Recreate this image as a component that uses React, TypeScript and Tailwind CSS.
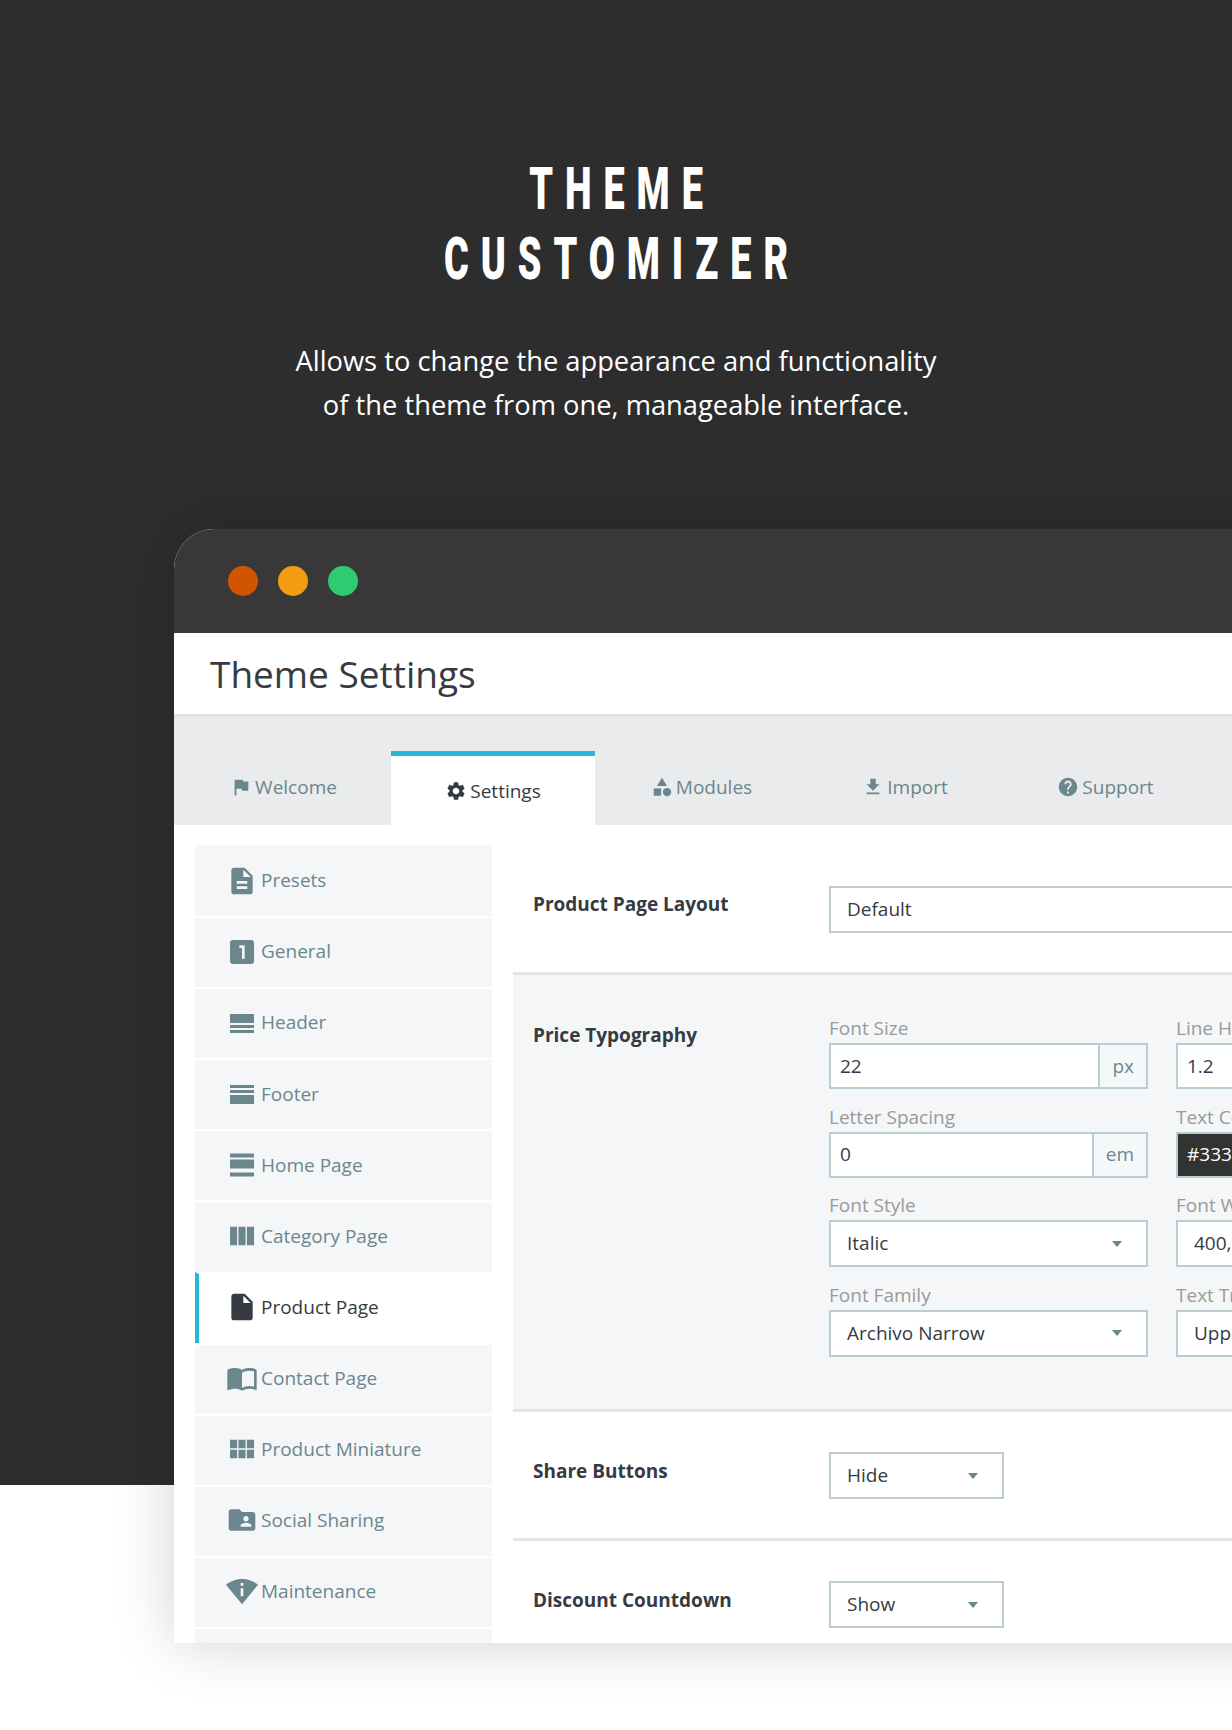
import type { ReactNode } from "react";
import {
  MdCategory,
  MdDescription,
  MdFileDownload,
  MdFlag,
  MdFolderShared,
  MdHelp,
  MdImportContacts,
  MdInsertDriveFile,
  MdLooksOne,
  MdPermScanWifi,
  MdSettings,
  MdViewColumn,
  MdViewModule,
} from "react-icons/md";

function Bars({ rows }: { rows: [number, number][] }) {
  return (
    <svg width="32" height="32" viewBox="0 0 32 32" fill="currentColor">
      {rows.map(([y, h]) => (
        <rect key={y} x="4" y={y} width="24" height={h} />
      ))}
    </svg>
  );
}

const tabs = [
  { label: "Welcome", icon: MdFlag, width: "w-[217px] pl-[2px]" },
  { label: "Settings", icon: MdSettings, width: "w-[204px]", active: true },
  { label: "Modules", icon: MdCategory, width: "w-[218px] pr-[5px]" },
  { label: "Import", icon: MdFileDownload, width: "w-[184px]" },
  { label: "Support", icon: MdHelp, width: "w-[215px] pl-[2px]" },
];

const menu: { label: string; icon: ReactNode; active?: boolean }[] = [
  { label: "Presets", icon: <MdDescription size={32} /> },
  { label: "General", icon: <MdLooksOne size={32} /> },
  { label: "Header", icon: <Bars rows={[[7, 9], [18, 3], [23, 3]]} /> },
  { label: "Footer", icon: <Bars rows={[[7, 3], [12, 3], [17, 9]]} /> },
  { label: "Home Page", icon: <Bars rows={[[4.5, 4], [10.5, 9], [23.5, 4]]} /> },
  { label: "Category Page", icon: <MdViewColumn size={32} /> },
  { label: "Product Page", icon: <MdInsertDriveFile size={32} />, active: true },
  { label: "Contact Page", icon: <MdImportContacts size={32} /> },
  { label: "Product Miniature", icon: <MdViewModule size={32} /> },
  { label: "Social Sharing", icon: <MdFolderShared size={32} /> },
  { label: "Maintenance", icon: <MdPermScanWifi size={32} /> },
  { label: "Custom Code", icon: <MdDescription size={32} /> },
];

function Caret() {
  return <span className="h-0 w-0 border-x-[5px] border-t-[6px] border-x-transparent border-t-[#6c868e]" />;
}

function Select({ value, className = "" }: { value: string; className?: string }) {
  return (
    <div className={`flex h-[47px] items-center justify-between border-2 border-[#bbcdd2] bg-white pl-[16px] pr-[24px] text-[#363a41] ${className}`}>
      <span>{value}</span>
      <Caret />
    </div>
  );
}

function Field({ label, children }: { label: string; children: ReactNode }) {
  return (
    <div>
      <div className="mb-[4px] h-[22px] leading-[22px] text-[#9a9a9a]">{label}</div>
      {children}
    </div>
  );
}

function Addon({ value, unit }: { value: string; unit: string }) {
  return (
    <div className="flex h-[46px] items-stretch border-2 border-[#bbcdd2] bg-white text-[#363a41]">
      <div className="flex flex-1 items-center pl-[9px]">{value}</div>
      {unit && (
        <div className="flex items-center border-l-2 border-[#bbcdd2] bg-[#f5f8f9] px-[12px] text-[#6c868e]">{unit}</div>
      )}
    </div>
  );
}

export default function App() {
  return (
    <div className="h-[1730px] w-[1232px] overflow-hidden bg-white font-['Open_Sans',sans-serif]">
      <div className="h-[1485px] bg-[#2d2d2d] pt-[154px]">
        <h1 className="origin-center scale-x-[0.63] pl-[19px] text-center font-['Roboto',sans-serif] text-[60px] font-black uppercase leading-[70px] tracking-[19px] text-white">
          Theme
          <br />
          Customizer
        </h1>
        <p className="mt-[45px] text-center text-[27.3px] leading-[44px] text-white">
          Allows to change the appearance and functionality
          <br />
          of the theme from one, manageable interface.
        </p>

        <div className="ml-[174px] mt-[102px] h-[1114px] w-[1200px] overflow-hidden rounded-tl-[40px] bg-white shadow-[0_0_60px_rgba(0,0,0,0.18)]">
          <div className="flex h-[104px] items-center gap-[20px] bg-[#383838] pl-[54px]">
            <span className="h-[30px] w-[30px] rounded-full bg-[#d35400]" />
            <span className="h-[30px] w-[30px] rounded-full bg-[#f39c12]" />
            <span className="h-[30px] w-[30px] rounded-full bg-[#2ecc71]" />
          </div>

          <div className="flex h-[84px] items-center border-b-[3px] border-[#dfe1e3] pl-[36px] text-[37px] text-[#363a41]">
            Theme Settings
          </div>

          <div className="flex h-[108px] items-end bg-[#eaebec]">
            {tabs.map((tab) => (
              <div
                key={tab.label}
                className={`flex h-[74px] items-center justify-center gap-[3px] text-[19px] ${tab.width} ${
                  tab.active
                    ? "border-t-[5px] border-[#25b9d7] bg-white pt-[1px] text-[#363a41]"
                    : "pb-[2px] text-[#6c868e]"
                }`}
              >
                <tab.icon size={22} />
                {tab.label}
              </div>
            ))}
          </div>

          <div className="flex gap-[21px] pl-[21px] pt-[20px] text-[19px]">
            <div className="w-[297px] shrink-0">
              {menu.map((item) => (
                <div
                  key={item.label}
                  className={`flex h-[71.1px] items-center gap-[3px] border-t-2 pb-[2px] first:border-t-[#f4f6f8] ${
                    item.active
                      ? "border-white border-l-4 border-l-[#25b9d7] bg-white pl-[27px] text-[#363a41]"
                      : "border-white bg-[#f4f6f8] pl-[31px] text-[#6c868e]"
                  }`}
                >
                  {item.icon}
                  {item.label}
                </div>
              ))}
            </div>

            <div className="-mt-[20px] flex-1">
              <div className="flex h-[150px] border-b-[3px] border-[#e3e4e5] pl-[20px] pt-[61px]">
                <div className="mt-[5px] w-[296px] font-bold leading-[26px] text-[#363a41]">Product Page Layout</div>
                <div className="flex h-[47px] w-[700px] items-center border-2 border-[#bbcdd2] bg-white pl-[16px] text-[#363a41]">
                  Default
                </div>
              </div>

              <div className="flex h-[437px] items-start border-b-[3px] border-[#e3e4e5] bg-[#f4f6f8] pl-[20px] pt-[42px]">
                <div className="mt-[5px] w-[296px] font-bold leading-[26px] text-[#363a41]">Price Typography</div>
                <div className="grid grid-cols-[319px_319px] gap-x-[28px] gap-y-[16.5px]">
                  <Field label="Font Size">
                    <Addon value="22" unit="px" />
                  </Field>
                  <Field label="Line Height">
                    <Addon value="1.2" unit="" />
                  </Field>
                  <Field label="Letter Spacing">
                    <Addon value="0" unit="em" />
                  </Field>
                  <Field label="Text Color">
                    <div className="flex h-[46px] items-center border-2 border-[#bbcdd2] bg-[#333333] pl-[9px] text-white">
                      #333333
                    </div>
                  </Field>
                  <Field label="Font Style">
                    <Select value="Italic" />
                  </Field>
                  <Field label="Font Weight">
                    <Select value="400, Regular" />
                  </Field>
                  <Field label="Font Family">
                    <Select value="Archivo Narrow" />
                  </Field>
                  <Field label="Text Transform">
                    <Select value="Uppercase" />
                  </Field>
                </div>
              </div>

              <div className="flex h-[129px] border-b-[3px] border-[#e3e4e5] pl-[20px] pt-[40px]">
                <div className="mt-[6px] w-[296px] font-bold leading-[26px] text-[#363a41]">Share Buttons</div>
                <Select value="Hide" className="w-[175px]" />
              </div>

              <div className="flex pl-[20px] pt-[40px]">
                <div className="mt-[6px] w-[296px] font-bold leading-[26px] text-[#363a41]">Discount Countdown</div>
                <Select value="Show" className="w-[175px]" />
              </div>
            </div>
          </div>
        </div>
      </div>
    </div>
  );
}
